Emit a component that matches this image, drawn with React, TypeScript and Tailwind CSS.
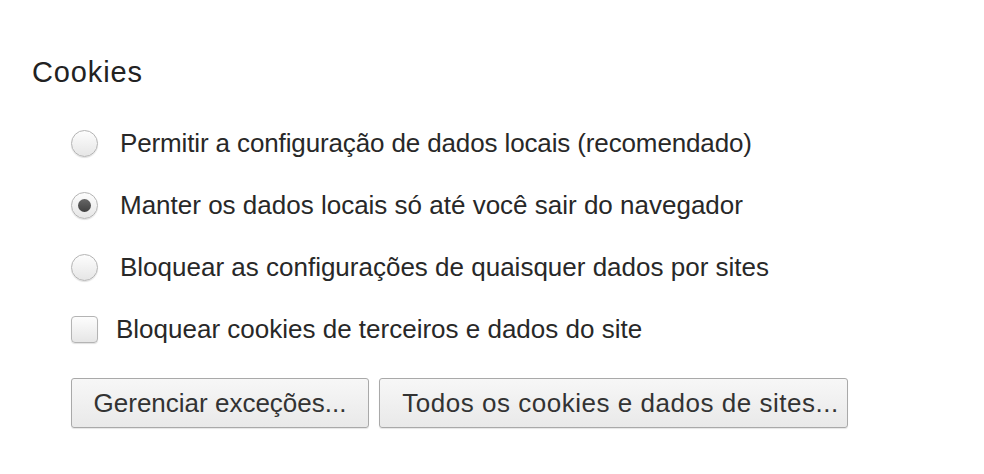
import React from "react";

const font = { fontFamily: '"Liberation Sans", Arial, sans-serif' };

function Radio({ checked }: { checked?: boolean }) {
  return (
    <div className="w-[27px] h-[27px] rounded-full border border-[#b4b4b4] bg-gradient-to-b from-[#fdfdfd] to-[#e6e6e6] shadow-[0_1px_1px_rgba(0,0,0,0.12)] flex items-center justify-center shrink-0">
      {checked && (
        <div className="w-[13px] h-[13px] rounded-full bg-gradient-to-b from-[#666666] to-[#404040]" />
      )}
    </div>
  );
}

function Row({ children }: { children: React.ReactNode }) {
  return <div className="h-[62px] flex items-center">{children}</div>;
}

export default function App() {
  return (
    <div className="w-[984px] h-[474px] bg-white text-[#282828] pt-[55px]" style={font}>
      <div className="pl-[32px] h-[36px] flex items-center text-[29px] tracking-[0.03em] text-[#222]">
        Cookies
      </div>
      <div className="pl-[71px] mt-[21px] text-[26px]">
        <Row>
          <Radio />
          <span className="ml-[22px] tracking-[-0.005em]">Permitir a configuração de dados locais (recomendado)</span>
        </Row>
        <Row>
          <Radio checked />
          <span className="ml-[22px]">Manter os dados locais só até você sair do navegador</span>
        </Row>
        <Row>
          <Radio />
          <span className="ml-[22px]">Bloquear as configurações de quaisquer dados por sites</span>
        </Row>
        <Row>
          <div className="w-[27px] h-[27px] rounded-[4px] border border-[#b4b4b4] bg-gradient-to-b from-[#fdfdfd] to-[#e6e6e6] shadow-[0_1px_1px_rgba(0,0,0,0.12)] shrink-0" />
          <span className="ml-[18px]">Bloquear cookies de terceiros e dados do site</span>
        </Row>
        <div className="flex gap-[10px] mt-[18px]">
          <button className="h-[50px] w-[298px] rounded-[3px] border border-[#a9a9a9] bg-gradient-to-b from-[#f7f7f7] to-[#e9e9e9] shadow-[0_1px_1px_rgba(0,0,0,0.1)] text-[26px] text-[#333]">
            Gerenciar exceções...
          </button>
          <button className="h-[50px] w-[469px] pl-[14px] rounded-[3px] border border-[#a9a9a9] bg-gradient-to-b from-[#f7f7f7] to-[#e9e9e9] shadow-[0_1px_1px_rgba(0,0,0,0.1)] text-[26px] tracking-[0.02em] text-[#333]">
            Todos os cookies e dados de sites...
          </button>
        </div>
      </div>
    </div>
  );
}
